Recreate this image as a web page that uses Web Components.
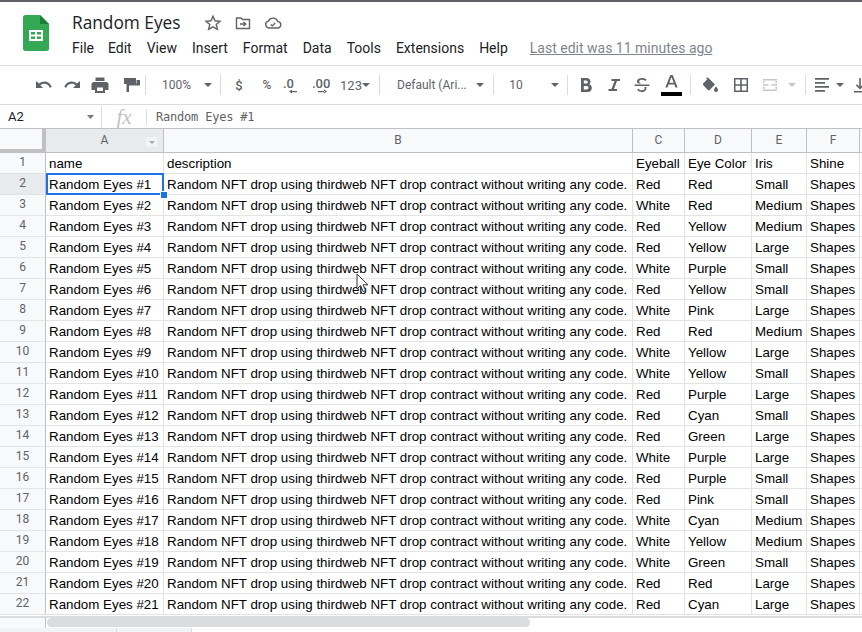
<!DOCTYPE html>
<html>
<head>
<meta charset="utf-8">
<title>Random Eyes</title>
<style>
  html, body { margin: 0; height: 100%; background: #fff; overflow: hidden; }
  body { font-family: "Liberation Sans", Arial, sans-serif; }
</style>
</head>
<body>
<sheet-app>
  <title-bar></title-bar>
  <tool-bar></tool-bar>
  <formula-bar cell="A2" value="Random Eyes #1"></formula-bar>
  <sheet-grid></sheet-grid>
</sheet-app>

<script>
class SheetApp extends HTMLElement {
  constructor() {
    super();
    this.attachShadow({ mode: "open" });
    this.shadowRoot.innerHTML = `
      <style>
        :host {
          display: flex;
          flex-direction: column;
          width: 862px;
          height: 632px;
          position: relative;
          overflow: hidden;
          border-top: 2px solid #5f6368;
          box-sizing: border-box;
        }
        svg { position: absolute; left: 356px; top: 271px; }
      </style>
      <slot></slot>
      <svg width="14" height="20" viewBox="0 0 14 20">
        <path d="M1 1v15l3.600-3.400 2.600 6 2.400-1-2.600-5.800H12z" fill="#fff" stroke="#333" stroke-width="1"/>
      </svg>
    `;
  }
}
customElements.define("sheet-app", SheetApp);

class TitleBar extends HTMLElement {
  constructor() {
    super();
    this.attachShadow({ mode: "open" });
    this.shadowRoot.innerHTML = `
      <style>
        :host {
          display: flex;
          height: 64px;
          box-sizing: border-box;
          border-bottom: 1px solid #dadce0;
          font-family: Roboto, sans-serif;
        }
        .logo { width: 72px; padding: 13px 0 0 23px; box-sizing: border-box; }
        .main { display: flex; flex-direction: column; }
        .top { display: flex; align-items: center; height: 33px; padding-top: 8px; box-sizing: border-box; }
        h1 {
          margin: 0;
          font: 400 17.3px "Open Sans", Roboto, sans-serif;
          color: #202124;
          width: 132px;
          line-height: 24px;
        }
        .top svg { margin-right: 12px; fill: none; stroke: #5f6368; stroke-width: 1.4; }
        nav { display: flex; align-items: center; height: 24px; margin-top: 1px; font-size: 14px; color: #202124; }
        nav span { margin-right: 15px; }
        nav span:first-child { margin-right: 14px; }
        nav a { margin-left: 7px; color: #80868b; text-decoration: underline; }
      </style>
      <div class="logo">
        <svg width="26" height="36" viewBox="0 0 26 36">
          <path d="M2.500 0H17l9 9v24.500a2.500 2.500 0 0 1-2.500 2.500h-21A2.500 2.500 0 0 1 0 33.500v-31A2.500 2.500 0 0 1 2.500 0z" fill="#34a853"/>
          <path d="M17 0l9 9h-9z" fill="#188038"/>
          <path d="M6 15h14v11H6z" fill="#fff"/>
          <path d="M8 17h4v2.500H8zM14 17h4v2.500h-4zM8 21.500h4V24H8zM14 21.500h4V24h-4z" fill="#34a853"/>
        </svg>
      </div>
      <div class="main">
        <div class="top">
          <h1>Random Eyes</h1>
          <svg width="18" height="18" viewBox="0 0 18 18"><path d="M9 2.200l2 4.600 5 .4-3.800 3.300 1.200 4.900L9 12.800l-4.400 2.600 1.200-4.900L2 7.200l5-.4z"/></svg>
          <svg width="18" height="18" viewBox="0 0 18 18"><path d="M2.500 14.500v-10.500h4.500l1.500 1.500h7v9zM6 10h5.500M9.500 8l2.200 2-2.200 2"/></svg>
          <svg width="18" height="18" viewBox="0 0 18 18"><path d="M5 14a3.500 3.500 0 0 1-.6-6.900 5 5 0 0 1 9.300.5A3.200 3.200 0 0 1 13.500 14zM6.800 10.600l1.600 1.300 2.800-3"/></svg>
        </div>
        <nav>
          <span>File</span><span>Edit</span><span>View</span><span>Insert</span><span>Format</span><span>Data</span><span>Tools</span><span>Extensions</span><span>Help</span>
          <a>Last edit was 11 minutes ago</a>
        </nav>
      </div>
    `;
  }
}
customElements.define("title-bar", TitleBar);

class ToolBar extends HTMLElement {
  constructor() {
    super();
    this.attachShadow({ mode: "open" });
    const caret = (w, c, sz) => {
      const s = sz || 8;
      return `<i class="it" style="width:${w}px"><svg width="${s}" height="${s / 2}" viewBox="0 0 8 4"><path d="M0 0h8L4 4z" fill="${c || "#5f6368"}"/></svg></i>`;
    };
    const ic = (d, w, extra) => `<i class="it" style="width:${w || 28}px;${extra || ""}"><svg width="18" height="18" viewBox="0 0 18 18">${d}</svg></i>`;
    const txt = (t, w, extra) => `<i class="it" style="width:${w}px;${extra || ""}">${t}</i>`;
    const sp = (w) => `<i class="it" style="width:${w}px"></i>`;
    const sep = `<b class="sep"></b>`;
    this.shadowRoot.innerHTML = `
      <style>
        :host {
          display: flex;
          align-items: center;
          height: 39px;
          padding-left: 30px;
          box-sizing: border-box;
          border-bottom: 1px solid #dadce0;
          font: 12px Roboto, sans-serif;
          color: #5f6368;
          overflow: hidden;
        }
        .it {
          flex: none;
          box-sizing: border-box;
          display: flex;
          align-items: center;
          justify-content: center;
          font-style: normal;
          height: 28px;
          white-space: nowrap;
        }
        .sep { flex: none; width: 1px; height: 20px; background: #dadce0; margin: 0 3px; }
        svg { display: block; fill: #5f6368; }
      </style>
      ${ic('<path d="M9.200 5.500c-2 0-3.800.8-5.100 2L1 5v7h7L5.300 9.300c1-.9 2.400-1.500 3.900-1.500 2.500 0 4.700 1.600 5.500 3.900l2-.7C15.600 7.700 12.700 5.500 9.200 5.500z"/>')}
      ${ic('<path d="M8.800 5.500c2 0 3.800.8 5.100 2L17 5v7h-7l2.700-2.700c-1-.9-2.400-1.500-3.900-1.500-2.500 0-4.700 1.600-5.500 3.900l-2-.7C2.400 7.700 5.300 5.500 8.800 5.500z"/>')}
      ${ic('<path d="M4.500 1.500h9v3.500h-9zM3 6h12a2.500 2.500 0 0 1 2.500 2.500v5.500h-3.500v3H4v-3H.5V8.500A2.500 2.500 0 0 1 3 6zM6 11.500v3.500h6v-3.500z" fill-rule="evenodd"/>')}
      ${ic('<path d="M1 2h12v6H1zM13.500 4H17v5.500H6V16H3.500V7.500h10z"/>', 28, "padding-left:7px")}
      ${sep}
      ${txt("100%", 49, "padding-left:6px")}
      ${caret(19, "#5f6368", 8)}
      ${sep}
      ${sp(1)}
      ${txt("$", 28, "font-weight:500;font-size:13px")}
      ${txt("%", 28, "font-weight:500")}
      ${ic('<text x="0" y="12" font-size="13" font-weight="500" font-family="Roboto" fill="#5f6368">.0</text><path d="M7 15h7v1.200H7zM9 13.500v4L6 15.500z"/>', 22)}
      ${ic('<text x="-1" y="12" font-size="13" font-weight="500" font-family="Roboto" fill="#5f6368">.00</text><path d="M5 15h7v1.200H5zM11 13.500v4l3-2z"/>', 38)}
      ${txt("123", 20, "font-size:13px")}
      ${caret(10)}
      ${sp(5)}
      ${sep}
      ${txt("Default (Ari...", 90, "justify-content:flex-start;padding-left:14px")}
      ${caret(14)}
      ${sp(3)}
      ${sep}
      ${txt("10", 38)}
      ${sp(13)}
      ${caret(14)}
      ${sp(2)}
      ${sep}
      ${sp(1)}
      ${ic('<path d="M4 2h5.800a3.800 3.800 0 0 1 2.700 6.400A4 4 0 0 1 10.400 16H4zM6.800 4.500v3h2.500a1.500 1.500 0 0 0 0-3zM6.800 10v3.500h3a1.750 1.750 0 0 0 0-3.500z" fill-rule="evenodd"/>')}
      ${ic('<path d="M6.500 3H15v2h-3l-3 8h3v2H3.500v-2h3l3-8H6.500z"/>')}
      ${ic('<path d="M1.500 8.500h15v1.500h-15zM5 7.500C4.300 6.800 4 6 4 5.200 4 3.400 5.800 2 9 2c2 0 3.500.5 4.700 1.700l-1.500 1.200C11.300 4.200 10.200 3.800 9 3.800c-1.700 0-2.900.6-2.900 1.500 0 .9.800 1.400 2 2.200zM11.300 11h2.200c.2 3.200-1.700 5-4.500 5-2 0-3.700-.7-4.900-2l1.500-1.300c.8 1 2 1.500 3.400 1.500 1.700 0 2.800-.9 2.800-2.200z"/>')}
      <i class="it" style="width:31px;height:30px;align-items:flex-start">
        <svg width="21" height="28" viewBox="0 0 21 28"><path d="M9.300 5h2.400l5 12.500h-2.200l-1.100-3H7.600l-1.100 3H4.300zM8.300 12.700h4.400L10.500 7z" fill-rule="evenodd"/><path d="M0 22h21v4H0z" fill="#000"/></svg>
      </i>
      ${sep}
      ${ic('<path d="M7 1.500l7 7-5.200 5.200a1.500 1.500 0 0 1-2.100 0L2.300 9.300a1.500 1.500 0 0 1 0-2.100l4-4-1.500-1.500zM15 10.500s2 2.200 2 3.400a2 2 0 0 1-4 0c0-1.200 2-3.400 2-3.400z"/>', 32)}
      ${ic('<path d="M2 2h14v14H2zM3.500 3.500v4.700h4.700V3.500zM9.800 3.500v4.700h4.700V3.500zM3.500 9.800v4.700h4.700V9.800zM9.800 9.800v4.700h4.700V9.800z" fill-rule="evenodd"/>', 29)}
      ${ic('<path d="M2 3h14v1.500H2zM2 13.500h14V15H2zM2 5h1.500v2H2zM14.500 5H16v2h-1.500zM2 11h1.500v2H2zM14.500 11H16v2h-1.500zM2 8.300h5.500v1.400H2zM10.500 8.300H16v1.400h-5.500z" fill="#c4c7c5"/>', 30)}
      ${caret(14, "#c4c7c5")}
      ${sp(3)}
      ${sep}
      ${ic('<path d="M2 2h14v1.700H2zM2 6h10v1.700H2zM2 10h14v1.700H2zM2 14h10v1.700H2z"/>', 26)}
      ${caret(10)}
      ${ic('<path d="M3 15h12v1.500H3zM8.200 2h1.600v8.500L12 8.300l1.100 1.100L9 13.500 4.900 9.400 6 8.300l2.200 2.200z"/>', 30)}
    `;
  }
}
customElements.define("tool-bar", ToolBar);

class FormulaBar extends HTMLElement {
  constructor() {
    super();
    this.attachShadow({ mode: "open" });
  }
  connectedCallback() {
    const cell = this.getAttribute("cell");
    const value = this.getAttribute("value");
    this.shadowRoot.innerHTML = `
      <style>
        :host {
          display: flex;
          align-items: center;
          height: 24px;
          box-sizing: border-box;
          border-bottom: 1px solid #c0c0c0;
        }
        .name { width: 102px; box-sizing: border-box; padding-left: 8px; font: 13px Roboto, sans-serif; color: #202124; display: flex; align-items: center; justify-content: space-between; padding-right: 7px; border-right: 1px solid #dadce0; height: 22px; }
        .name svg { fill: #777; }
        .fx { width: 44px; text-align: center; font: italic 21px "Liberation Serif", serif; color: #bdc1c6; line-height: 22px; }
        .bar { width: 1px; height: 16px; background: #dadce0; margin-right: 9px; }
        .val { font: 12px "DejaVu Sans Mono", monospace; color: #5f6368; letter-spacing: -.2px; }
      </style>
      <div class="name">${cell}<svg width="7" height="4" viewBox="0 0 7 4"><path d="M0 0h7L3.500 4z"/></svg></div>
      <div class="fx">fx</div>
      <div class="bar"></div>
      <div class="val">${value}</div>
    `;
  }
}
customElements.define("formula-bar", FormulaBar);

const ROWS = [
  ["Red","Red","Small"],["White","Red","Medium"],["Red","Yellow","Medium"],["Red","Yellow","Large"],
  ["White","Purple","Small"],["Red","Yellow","Small"],["White","Pink","Large"],["Red","Red","Medium"],
  ["White","Yellow","Large"],["White","Yellow","Small"],["Red","Purple","Large"],["Red","Cyan","Small"],
  ["Red","Green","Large"],["White","Purple","Large"],["Red","Purple","Small"],["Red","Pink","Small"],
  ["White","Cyan","Medium"],["White","Yellow","Medium"],["White","Green","Small"],["Red","Red","Large"],["Red","Cyan","Large"],
];
const DESC = "Random NFT drop using thirdweb NFT drop contract without writing any code.";

class SheetGrid extends HTMLElement {
  constructor() {
    super();
    this.attachShadow({ mode: "open" });
    const heads = ["A","B","C","D","E","F",""];
    let html = `<div class="h corner"></div>`;
    heads.forEach((h, i) => {
      html += `<div class="h col ${i == 0 ? "on" : ""}">${h}${i == 0 ? '<span class="flt"><svg width="6" height="3" viewBox="0 0 8 4"><path d="M0 0h8L4 4z" fill="#aaa"/></svg></span>' : ""}</div>`;
    });
    const addRow = (n, cells, on) => {
      html += `<div class="h num ${on ? "on" : ""}">${n}</div>`;
      cells.forEach((c, i) => {
        html += `<div class="c ${on && i == 0 ? "sel" : ""}">${c}</div>`;
      });
    };
    addRow(1, ["name","description","Eyeball","Eye Color","Iris","Shine",""]);
    ROWS.forEach((r, i) => {
      addRow(i + 2, ["Random Eyes #" + (i + 1), DESC, r[0], r[1], r[2], "Shapes", ""], i == 0);
    });
    this.shadowRoot.innerHTML = `
      <style>
        :host {
          display: block;
          flex: 1;
          min-height: 0;
          position: relative;
          overflow: hidden;
        }
        .g {
          display: grid;
          grid-template-columns: 46px 118px 469px 52px 67px 55px 53px 10px;
          grid-template-rows: 24px repeat(22, 21px);
          font: 13.333px "Liberation Sans", Arial, sans-serif;
          color: #000;
        }
        .h {
          box-sizing: border-box;
          background: #f8f9fa;
          border-right: 1px solid #c0c0c0;
          border-bottom: 1px solid #c0c0c0;
          display: flex;
          align-items: center;
          justify-content: center;
          padding-bottom: 2px;
          font: 12px Roboto, sans-serif;
          color: #5f6368;
          position: relative;
        }
        .h.on { background: #e8eaed; }
        .corner { border-right: 4px solid #c0c0c0; border-bottom: 4px solid #c0c0c0; }
        .num { border-right: 1px solid #c0c0c0; border-bottom: 1px solid #e2e3e3; }
        .c {
          box-sizing: border-box;
          border-right: 1px solid #e2e3e3;
          border-bottom: 1px solid #e2e3e3;
          padding: 0 3px;
          line-height: 21px;
          white-space: nowrap;
          overflow: hidden;
          position: relative;
        }
        .sel {
          overflow: visible;
          z-index: 2;
          box-shadow: inset 0 0 0 2px #1a73e8;
          margin: -1px 0 0 0;
          height: 22px;
          line-height: 23px;
          border: 0;
          width: 118px;
        }
        .sel::after {
          content: "";
          position: absolute;
          right: -3px;
          bottom: -3px;
          width: 6px;
          height: 6px;
          background: #1a73e8;
          outline: 1px solid #fff;
        }
        .flt {
          position: absolute;
          right: 6px;
          top: 8px;
          width: 11px;
          height: 10px;
          background: #f1f3f4;
          display: flex;
          align-items: center;
          justify-content: center;
        }
        .scroll {
          position: absolute;
          left: 0;
          right: 0;
          top: 487px;
          height: 12px;
          box-sizing: border-box;
          border-top: 2px solid #dadce0;
          background: #fff;
          display: flex;
        }
        .gut { width: 46px; background: #f8f9fa; border-right: 1px solid #c0c0c0; box-sizing: border-box; }
        .thumb { width: 483px; height: 9px; margin: 0 0 0 1px; background: #dadce0; border-radius: 5px; }
        .tabs { position: absolute; left: 0; right: 0; top: 499px; height: 4px; display: flex; background: #fff; }
        .tabs div { box-sizing: border-box; background: #f1f3f4; border-right: 1px solid #dadce0; }
      </style>
      <div class="g">${html}</div>
      <div class="scroll"><div class="gut"></div><div class="thumb"></div></div>
      <div class="tabs"><div style="width:117px"></div><div style="width:75px"></div></div>
    `;
  }
}
customElements.define("sheet-grid", SheetGrid);
</script>
</body>
</html>
